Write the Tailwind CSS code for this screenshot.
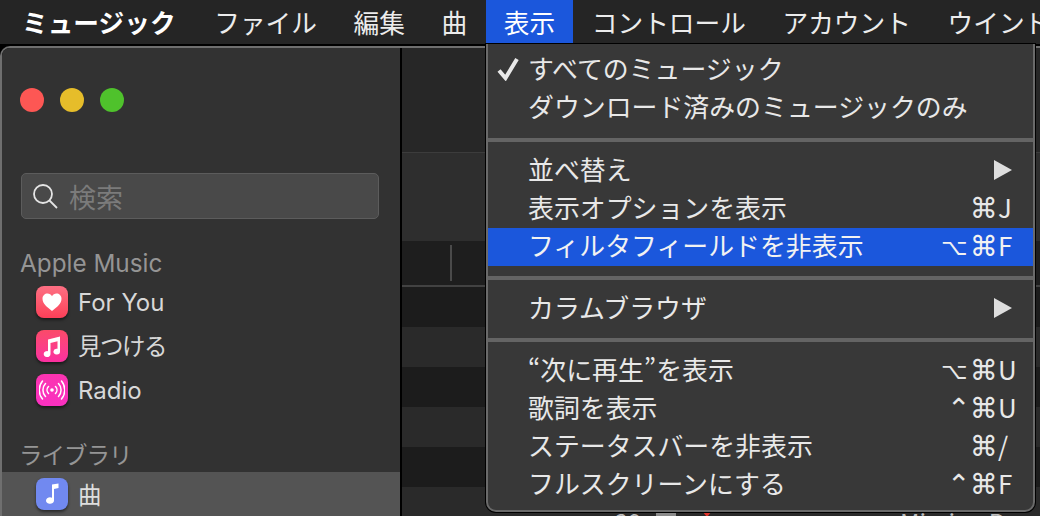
<!DOCTYPE html>
<html lang="ja">
<head>
  <meta charset="UTF-8">
  <title>ミュージック</title>
  <script src="https://cdn.jsdelivr.net/npm/@tailwindcss/browser@4"></script>
</head>
<body class="relative w-[1040px] h-[516px] overflow-hidden bg-black text-[#e6e6e6] font-['Noto_Sans_CJK_JP','Noto_Sans',sans-serif]">

  <!-- menu bar -->
  <div class="flex h-[44px] bg-[#252525] pl-[22px] text-[25.700px] leading-[44px] text-[#ececec] whitespace-nowrap overflow-hidden">
    <div class="font-bold text-white mr-[20.300px]">ミュージック</div>
    <div class="px-[18.300px]">ファイル</div>
    <div class="px-[18.300px]">編集</div>
    <div class="px-[18.300px]">曲</div>
    <div class="px-[18.300px] bg-[#1b57dc] text-white">表示</div>
    <div class="px-[18.300px]">コントロール</div>
    <div class="px-[18.300px]">アカウント</div>
    <div class="px-[18.300px]">ウインドウ</div>
  </div>

  <!-- window -->
  <div class="flex h-[472px] mt-[2px] rounded-tl-[10px] overflow-hidden border-t-2 border-l-2 border-[#6f6f6f]">

    <!-- sidebar -->
    <div class="w-[398px] shrink-0 bg-[#323232] flex flex-col">
      <div class="flex gap-[16px] pl-[18px] pt-[40px]">
        <span class="w-[24px] h-[24px] rounded-full bg-[#fd5754]"></span>
        <span class="w-[24px] h-[24px] rounded-full bg-[#e6bd2a]"></span>
        <span class="w-[24px] h-[24px] rounded-full bg-[#4fc22c]"></span>
      </div>
      <div class="mt-[61px] ml-[19px] w-[358px] h-[46px] rounded-[5px] bg-[#494949] border border-[#5c5c5c] flex items-center pl-[10px] gap-[11px]">
        <svg class="w-[26px] h-[26px]" viewBox="0 0 26 26" fill="none" stroke="#e4e4e4" stroke-width="1.800"><circle cx="11" cy="11" r="9"/><path d="M17.500 17.500 25 25"/></svg>
        <span class="text-[27px] leading-none text-[#7b7b7b]">検索</span>
      </div>
      <div class="mt-[28px] pl-[18px] h-[31px] text-[24.300px] leading-[32px] text-[#959595] font-['Inter',sans-serif]">Apple Music</div>
      <div class="flex flex-col mt-[2px] pl-[34px] text-[24px] text-[#d8d8d8] font-['Inter','Noto_Sans_CJK_JP',sans-serif]">
        <div class="flex items-center gap-[10px] h-[44px]">
          <span class="w-[32px] h-[32px] rounded-[8px] bg-gradient-to-b from-[#fd6f83] to-[#fb3e58] shadow-[0_2px_3px_rgba(0,0,0,0.5)] flex items-center justify-center">
            <svg class="w-[22px] h-[22px]" viewBox="0 0 22 22" fill="#fff"><path d="M11 20C6 16 1.500 12.500 1.500 7.700 1.500 4.500 3.900 2.500 6.500 2.500 8.400 2.500 10 3.500 11 5.200 12 3.500 13.600 2.500 15.500 2.500 18.100 2.500 20.500 4.500 20.500 7.700 20.500 12.500 16 16 11 20Z"/></svg>
          </span>
          <span class="pt-[2px]">For You</span>
        </div>
        <div class="flex items-center gap-[10px] h-[44px]">
          <span class="w-[32px] h-[32px] rounded-[8px] bg-gradient-to-b from-[#fb4a68] to-[#fb2fa0] shadow-[0_2px_3px_rgba(0,0,0,0.5)] flex items-center justify-center">
            <svg class="w-[22px] h-[24px]" viewBox="0 0 22 24" fill="#fff"><path d="M7 5.500 19 2.500V17.500A3.300 2.900 0 1 1 16.500 14.800V7.200L9.500 8.900V20A3.400 3 0 1 1 7 17.200Z"/></svg>
          </span>
          <span class="pt-[2px] text-[23.500px] tracking-[-1.500px]">見つける</span>
        </div>
        <div class="flex items-center gap-[10px] h-[44px]">
          <span class="w-[32px] h-[32px] rounded-[8px] bg-gradient-to-b from-[#fb34b0] to-[#fa30c0] shadow-[0_2px_3px_rgba(0,0,0,0.5)] flex items-center justify-center">
            <svg class="w-[26px] h-[20px]" viewBox="0 0 26 20" fill="none" stroke="#fff" stroke-width="1.500" stroke-linecap="round"><circle cx="13" cy="10" r="1.800" fill="#fff" stroke="none"/><path d="M9.500 6.500a5 5 0 0 0 0 7M16.500 6.500a5 5 0 0 1 0 7M6.500 3.500a9.500 9.500 0 0 0 0 13M19.500 3.500a9.500 9.500 0 0 1 0 13M3.500 1a14 14 0 0 0 0 18M22.500 1a14 14 0 0 1 0 18"/></svg>
          </span>
          <span class="pt-[2px]">Radio</span>
        </div>
      </div>
      <div class="mt-[26px] pl-[17px] h-[32px] text-[23.500px] leading-[32px] text-[#959595] tracking-[-1px]">ライブラリ</div>
      <div class="mt-[2px] h-[44px] bg-[#545454] pl-[34px] flex items-center gap-[10px] text-[23.500px] text-[#dedede]">
        <span class="w-[32px] h-[32px] rounded-[8px] bg-[#7189f0] shadow-[0_2px_3px_rgba(0,0,0,0.5)] flex items-center justify-center">
          <svg class="w-[20px] h-[24px]" viewBox="0 0 20 24" fill="#fff"><path d="M10 2.500 16.500 1.500V6L12 7V18.500A4 3.300 0 1 1 10 15.700Z"/></svg>
        </span>
        <span class="pt-[1px]">曲</span>
      </div>
    </div>

    <div class="w-[2px] shrink-0 bg-black"></div>

    <!-- song list behind the menu -->
    <div class="flex-1 flex flex-col bg-[#2a2a2a]">
      <div class="h-[105px] shrink-0 bg-[#272727] border-b border-[#3c3c3c] flex justify-end">
        <div class="w-[3px] h-[96px] bg-[#454545]"></div>
      </div>
      <div class="h-[88px] shrink-0 bg-[#2e2e2e]"></div>
      <div class="h-[44px] shrink-0 bg-[#1e1e1e] pt-[4px] pl-[48px]">
        <div class="w-[2px] h-[36px] bg-[#4a4a4a]"></div>
      </div>
      <div class="h-[2px] shrink-0 bg-[#424242]"></div>
      <div class="h-[40px] shrink-0 bg-[#1c1c1c]"></div>
      <div class="h-[40px] shrink-0 bg-[#2a2a2a]"></div>
      <div class="h-[40px] shrink-0 bg-[#1c1c1c]"></div>
      <div class="h-[40px] shrink-0 bg-[#2a2a2a]"></div>
      <div class="h-[40px] shrink-0 bg-[#1c1c1c]"></div>
      <div class="h-[40px] shrink-0 bg-[#2a2a2a] flex pt-[20px] text-[24px] leading-[30px] text-[#bdbdbd] whitespace-nowrap">
        <span class="ml-[213px] w-[41px]">29</span>
        <span class="w-[20px] h-[10px] mt-[3px] bg-[#8a8a8a]"></span>
        <span class="ml-[26px] w-0 h-0 mt-[4px] border-x-[5px] border-x-transparent border-t-[6px] border-t-[#e0342c]"></span>
        <span class="ml-[188px]">Missing Persons</span>
      </div>
    </div>
  </div>

  <!-- view menu -->
  <div class="absolute left-[486px] top-[44px] w-[549px] h-[468px] bg-[#383838] rounded-b-[10px] border-x-2 border-b-2 border-[#6a6a6a] shadow-[0_0_0_1px_#000] pt-[7px] text-[25.900px] leading-[34px] text-[#e8e8e8] whitespace-nowrap">
    <div class="relative h-[38px] pl-[40px]">
      <svg class="absolute left-[8px] top-[6px] w-[24px] h-[24px]" viewBox="0 0 24 24" fill="none" stroke="#e8e8e8" stroke-width="4"><path d="M3 13.500 9.500 21 21 2"/></svg>
      <span>すべてのミュージック</span>
    </div>
    <div class="h-[38px] pl-[40px]">ダウンロード済みのミュージックのみ</div>
    <div class="h-[4px] bg-[#646464] mt-[11px] mb-[10px]"></div>
    <div class="flex justify-between h-[38px] pl-[40px] pr-[21px]"><span>並べ替え</span>
      <svg class="w-[18px] h-[20px] mt-[8px]" viewBox="0 0 18 20" fill="#dedede"><path d="M0 0 18 10 0 20Z"/></svg>
    </div>
    <div class="flex justify-between h-[38px] pl-[40px]"><span>表示オプションを表示</span>
      <span class="flex w-[92px]"><span class="w-[29px]"></span><span class="w-[28px] pt-[2px] font-['DejaVu_Sans'] text-[28px]">⌘</span>J</span></div>
    <div class="flex justify-between h-[38px] pl-[40px] bg-[#1b57dc] text-[#f2f2f2]"><span>フィルタフィールドを非表示</span>
      <span class="flex w-[92px]"><span class="w-[29px] pt-[2px] font-['DejaVu_Sans'] text-[23px]">⌥</span><span class="w-[28px] pt-[2px] font-['DejaVu_Sans'] text-[28px]">⌘</span>F</span></div>
    <div class="h-[4px] bg-[#646464] my-[10px]"></div>
    <div class="flex justify-between h-[38px] pl-[40px] pr-[21px]"><span>カラムブラウザ</span>
      <svg class="w-[18px] h-[20px] mt-[8px]" viewBox="0 0 18 20" fill="#dedede"><path d="M0 0 18 10 0 20Z"/></svg>
    </div>
    <div class="h-[4px] bg-[#646464] my-[10px]"></div>
    <div class="flex justify-between h-[38px] pl-[40px]"><span>“次に再生”を表示</span>
      <span class="flex w-[92px]"><span class="w-[29px] pt-[2px] font-['DejaVu_Sans'] text-[23px]">⌥</span><span class="w-[28px] pt-[2px] font-['DejaVu_Sans'] text-[28px]">⌘</span>U</span></div>
    <div class="flex justify-between h-[38px] pl-[40px]"><span>歌詞を表示</span>
      <span class="flex w-[92px]"><span class="w-[29px] pl-[6px] pt-[2px] font-['DejaVu_Sans'] text-[28px]">⌃</span><span class="w-[28px] pt-[2px] font-['DejaVu_Sans'] text-[28px]">⌘</span>U</span></div>
    <div class="flex justify-between h-[38px] pl-[40px]"><span>ステータスバーを非表示</span>
      <span class="flex w-[92px]"><span class="w-[29px]"></span><span class="w-[28px] pt-[2px] font-['DejaVu_Sans'] text-[28px]">⌘</span>/</span></div>
    <div class="flex justify-between h-[38px] pl-[40px]"><span>フルスクリーンにする</span>
      <span class="flex w-[92px]"><span class="w-[29px] pl-[6px] pt-[2px] font-['DejaVu_Sans'] text-[28px]">⌃</span><span class="w-[28px] pt-[2px] font-['DejaVu_Sans'] text-[28px]">⌘</span>F</span></div>
  </div>
</body>
</html>
